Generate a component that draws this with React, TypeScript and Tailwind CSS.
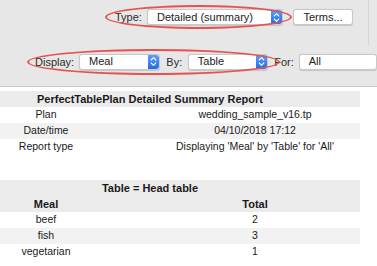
import React from 'react';

const Stepper: React.FC = () => (
  <div className="flex h-full w-[11px] items-center justify-center rounded-r-[3px] bg-gradient-to-b from-[#5a9ef9] to-[#1d6ceb]">
    <svg width="7" height="11" viewBox="0 0 7 11" fill="none">
      <path d="M1.2 4 L3.5 1.7 L5.8 4" stroke="white" strokeWidth="1.1" strokeLinecap="round" strokeLinejoin="round" />
      <path d="M1.2 7 L3.5 9.3 L5.8 7" stroke="white" strokeWidth="1.1" strokeLinecap="round" strokeLinejoin="round" />
    </svg>
  </div>
);

interface PopupProps {
  value: string;
  width: string;
  stepper?: boolean;
}

const Popup: React.FC<PopupProps> = ({ value, width, stepper = true }) => (
  <div className={`flex h-[16px] items-center rounded-[3px] border border-[#c9c9c9] bg-white shadow-[0_0.5px_1px_rgba(0,0,0,0.15)] ${width}`}>
    <span className="flex-1 pl-[9px] text-[11px] leading-none text-[#222]">{value}</span>
    {stepper && <Stepper />}
  </div>
);

const rows = [
  { label: 'Plan', value: 'wedding_sample_v16.tp' },
  { label: 'Date/time', value: '04/10/2018 17:12' },
  { label: 'Report type', value: "Displaying 'Meal' by 'Table' for 'All'" },
];

const meals = [
  { meal: 'beef', total: 2 },
  { meal: 'fish', total: 3 },
  { meal: 'vegetarian', total: 1 },
];

const Row: React.FC<{ left: React.ReactNode; right: React.ReactNode; shaded?: boolean; bold?: boolean }> = ({ left, right, shaded, bold }) => (
  <div className={`flex h-[16px] w-[360px] items-center ${shaded ? 'bg-[#f2f2f2]' : ''} ${bold ? 'text-[11px] font-bold' : 'text-[10.5px]'}`}>
    <div className="w-[92px] text-center">{left}</div>
    <div className="w-[268px] pl-[58px] text-center">{right}</div>
  </div>
);

export default function App() {
  return (
    <div className="relative h-[266px] w-[377px] overflow-hidden bg-white text-[#1a1a1a]" style={{ fontFamily: '"Liberation Sans", Arial, sans-serif' }}>
      {/* settings panel */}
      <div className="relative h-[87px] border-b border-[#cdcdcd] bg-[#e7e7e7]">
        <div className="flex items-center pl-[115px] pt-[9px]">
          <span className="w-[32px] text-[11px] text-[#2a2a2a]">Type:</span>
          <Popup value="Detailed (summary)" width="w-[136px]" />
          <button className="ml-[10px] flex h-[16px] w-[60px] items-center justify-center rounded-[3px] border border-[#c9c9c9] bg-white text-[11px] leading-none text-[#222] shadow-[0_0.5px_1px_rgba(0,0,0,0.15)]">
            Terms...
          </button>
        </div>
        <div className="mt-[28px] flex items-center pl-[35px]">
          <span className="w-[45px] text-[11px] text-[#2a2a2a]">Display:</span>
          <Popup value="Meal" width="w-[83px]" />
          <span className="ml-[6px] w-[22px] text-[11px] text-[#2a2a2a]">By:</span>
          <Popup value="Table" width="w-[82px]" />
          <span className="ml-[6px] w-[25px] text-[11px] text-[#2a2a2a]">For:</span>
          <Popup value="All" width="w-[80px]" stepper={false} />
        </div>
        <div className="absolute right-[8px] top-0 h-[45px] w-px bg-[#d4d4d4]" />
      </div>

      {/* report */}
      <div className="mt-[4px]">
        <div className="flex h-[16px] w-[360px] items-center justify-center bg-[#ebebeb] pr-[60px] text-[11px] font-bold">
          PerfectTablePlan Detailed Summary Report
        </div>
        {rows.map((r, i) => (
          <Row key={r.label} left={r.label} right={r.value} shaded={i % 2 === 1} />
        ))}
      </div>

      <div className="mt-[25px]">
        <div className="w-[360px] bg-[#ebebeb]">
          <div className="flex h-[16px] items-center justify-center pr-[60px] text-[11px] font-bold">Table = Head table</div>
          <Row left="Meal" right="Total" bold />
        </div>
        {meals.map((m, i) => (
          <Row key={m.meal} left={m.meal} right={m.total} shaded={i % 2 === 1} />
        ))}
      </div>

      {/* highlight rings */}
      <div className="absolute left-[105px] top-[5px] h-[24px] w-[187px] rounded-[50%] border-2 border-[#e5524f]" />
      <div className="absolute left-[27px] top-[49px] h-[26px] w-[253px] rounded-[50%] border-2 border-[#e5524f]" />
    </div>
  );
}
